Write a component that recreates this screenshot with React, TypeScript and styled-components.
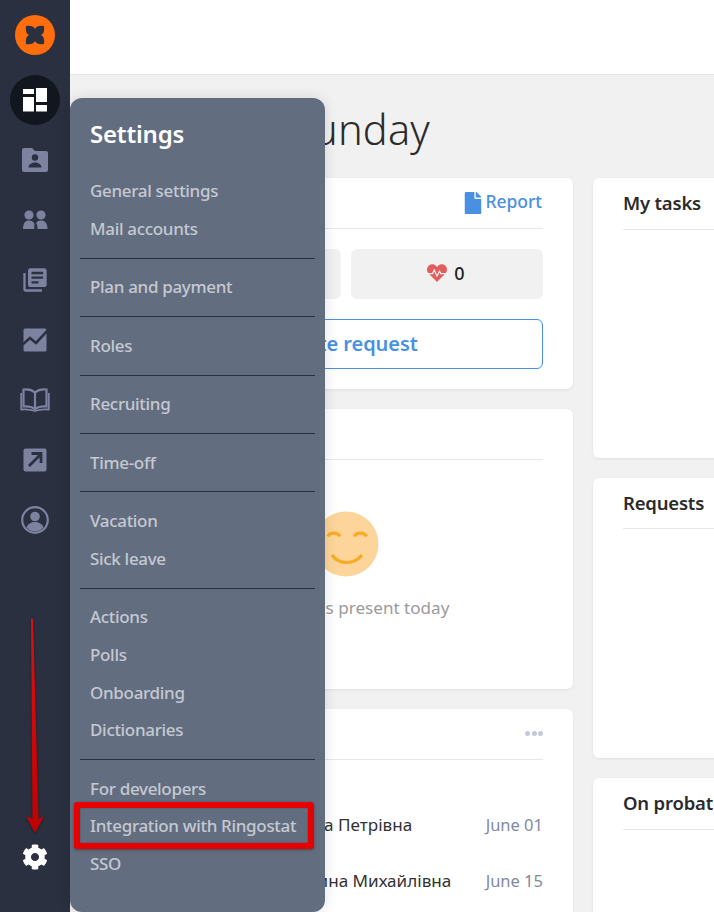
import { createGlobalStyle, styled } from "styled-components";
import { FaCog, FaFile, FaHeartbeat, FaPlane } from "react-icons/fa";

const sidebarBg = "#2a3040";
const iconColor = "#7d829f";
const flyoutBg = "#636d80";
const blue = "#4a90e2";
const textFont = `"Noto Sans", "Open Sans", sans-serif`;

const GlobalStyle = createGlobalStyle`
  html, body {
    margin: 0;
    padding: 0;
    background: #f1f1f1;
    font-family: ${textFont};
  }
`;

const Page = styled.div`
  position: relative;
  display: flex;
  width: 714px;
  height: 912px;
  overflow: hidden;
`;

const Sidebar = styled.nav`
  flex: 0 0 70px;
  display: flex;
  flex-direction: column;
  align-items: center;
  background: ${sidebarBg};
`;

const NavSlot = styled.div<{ $height: number }>`
  height: ${({ $height }) => $height}px;
  flex: none;
  width: 100%;
  display: flex;
  align-items: center;
  justify-content: center;
  color: ${iconColor};
`;

const ActiveDisc = styled.div`
  width: 50px;
  height: 50px;
  border-radius: 50%;
  background: #12161f;
  display: flex;
  align-items: center;
  justify-content: center;
`;

const GearSlot = styled.div`
  margin-top: auto;
  height: 110px;
  padding-bottom: 42px;
  box-sizing: border-box;
  display: flex;
  align-items: flex-end;
  color: #fff;
  font-size: 26px;
  line-height: 0;
`;

const Main = styled.main`
  flex: 1;
  min-width: 0;
  display: flex;
  flex-direction: column;
  overflow: hidden;
`;

const TopBar = styled.header`
  flex: 0 0 74px;
  background: #fff;
  border-bottom: 1px solid #e6e6e6;
`;

const Content = styled.div`
  padding-left: 49px;
  width: 928px;
`;

const Title = styled.h1`
  margin: 0;
  height: 103px;
  padding-top: 4px;
  box-sizing: border-box;
  display: flex;
  align-items: center;
  justify-content: flex-end;
  width: 311px;
  font-size: 41.5px;
  font-weight: 300;
  color: #2b2b2b;
  white-space: nowrap;
  letter-spacing: 0.2px;
`;

const Columns = styled.div`
  display: flex;
  gap: 20px;
`;

const Column = styled.div`
  width: 454px;
  display: flex;
  flex-direction: column;
  gap: 20px;
`;

const Card = styled.section<{ $height: number }>`
  height: ${({ $height }) => $height}px;
  box-sizing: border-box;
  padding: 0 30px;
  background: #fff;
  border-radius: 6px;
  box-shadow: 0 1px 3px rgba(0, 0, 0, 0.08);
  display: flex;
  flex-direction: column;
`;

const CardHeader = styled.div<{ $extra?: number }>`
  flex: 0 0 50px;
  box-sizing: content-box;
  padding-bottom: ${({ $extra = 0 }) => $extra}px;
  display: flex;
  align-items: center;
  justify-content: space-between;
  border-bottom: 1px solid #e8e8e8;
`;

const CardTitle = styled.h2`
  margin: 0 0 1px;
  font-size: 18.5px;
  font-weight: 600;
  color: #2b2b2b;
  letter-spacing: -0.2px;
`;

const ReportLink = styled.a`
  display: flex;
  align-items: center;
  gap: 2px;
  margin-right: 1px;
  color: ${blue};
  font-size: 17.5px;
  font-weight: 500;
  letter-spacing: -0.05px;
`;

const ReportLabel = styled.span`
  margin-bottom: 5px;
`;

const Dots = styled.div`
  display: flex;
  gap: 1.5px;
  margin-bottom: 2px;
`;

const Dot = styled.span`
  width: 5px;
  height: 5px;
  border-radius: 50%;
  background: #c4cadb;
`;

const Stats = styled.div`
  margin-top: 20px;
  display: flex;
  gap: 10px;
`;

const StatBox = styled.div`
  flex: 1;
  height: 50px;
  padding-bottom: 2px;
  box-sizing: border-box;
  border-radius: 6px;
  background: #f1f1f1;
  display: flex;
  align-items: center;
  justify-content: center;
  gap: 7px;
  font-size: 18px;
  font-weight: 500;
  color: #222;
`;

const HeartIcon = styled(FaHeartbeat)`
  color: #e35d5d;
  font-size: 20px;
  margin-left: -2px;
`;

const RequestButton = styled.button`
  margin-top: 20px;
  height: 50px;
  padding: 0 0 2px;
  border: 1px solid ${blue};
  border-radius: 6px;
  background: #fff;
  color: ${blue};
  font-family: inherit;
  font-size: 20px;
  font-weight: 600;
  letter-spacing: -0.05px;
`;

const EmptyState = styled.div`
  margin-top: 51px;
  display: flex;
  flex-direction: column;
  align-items: center;
  gap: 19px;
  font-size: 17.1px;
  color: #9b9b9b;
`;

const PersonList = styled.div`
  margin-top: 46px;
  display: flex;
  flex-direction: column;
  gap: 20px;
`;

const PersonRow = styled.div`
  height: 36px;
  display: flex;
  align-items: center;
  gap: 16px;
  font-size: 17.1px;
  color: #333;
  white-space: nowrap;
`;

const Avatar = styled.span`
  flex: 0 0 30px;
  height: 30px;
  border-radius: 50%;
  background: #d8dce6;
`;

const PersonDate = styled.span`
  margin-left: auto;
  color: #7f8aa3;
  font-size: 16.5px;
`;

const Flyout = styled.aside`
  position: absolute;
  left: 70px;
  top: 98px;
  bottom: 0;
  width: 255px;
  box-sizing: border-box;
  padding: 0 10px;
  background: ${flyoutBg};
  border-radius: 12px;
  box-shadow: 0 0 14px rgba(0, 0, 0, 0.12);
`;

const FlyoutTitle = styled.div`
  height: 74px;
  padding: 0 10px 3px;
  box-sizing: border-box;
  display: flex;
  align-items: center;
  color: #fff;
  font-size: 24px;
  font-weight: 600;
  letter-spacing: -0.2px;
`;

const FlyoutItem = styled.div`
  height: 37.7px;
  padding: 0 10px;
  display: flex;
  align-items: center;
  color: #c4c9d2;
  font-size: 17px;
  font-weight: 500;
  letter-spacing: -0.32px;
  white-space: nowrap;
`;

const FlyoutRule = styled.hr`
  margin: 10.4px 0 9.35px;
  height: 1px;
  border: 0;
  background: ${sidebarBg};
`;

const Highlight = styled.div`
  position: absolute;
  left: 74px;
  top: 802px;
  width: 240px;
  height: 47px;
  box-sizing: border-box;
  border: 6px solid #e60000;
  border-radius: 3px;
  box-shadow: 0 1px 3px rgba(0, 0, 0, 0.35), inset 0 0 2px rgba(0, 0, 0, 0.3);
`;

const ArrowMark = styled.svg`
  position: absolute;
  left: 20px;
  top: 612px;
  filter: drop-shadow(0 1px 1px rgba(0, 0, 0, 0.4));
`;

const menu = [
  ["General settings", "Mail accounts"],
  ["Plan and payment"],
  ["Roles"],
  ["Recruiting"],
  ["Time-off"],
  ["Vacation", "Sick leave"],
  ["Actions", "Polls", "Onboarding", "Dictionaries"],
  ["For developers", "Integration with Ringostat", "SSO"],
];

const Logo = () => (
  <svg width="40" height="40" viewBox="0 0 40 40">
    <circle cx="20" cy="20" r="20" fill="#ff6d0d" />
    <path
      d="M11 11Q18 10 20 14Q22 10 29 11Q30 18 26 20Q30 22 29 29Q22 30 20 26Q18 30 11 29Q10 22 14 20Q10 18 11 11Z"
      fill={sidebarBg}
    />
  </svg>
);

const DashboardIcon = () => (
  <svg width="24" height="24" viewBox="0 0 24 24" fill="#fff">
    <rect x="0" y="1" width="11" height="5" />
    <rect x="0" y="9" width="11" height="14.5" />
    <rect x="13" y="0" width="11" height="14" />
    <rect x="13" y="17" width="11" height="6.5" />
  </svg>
);

const FolderIcon = () => (
  <svg width="26" height="24" viewBox="0 0 26 24">
    <path
      d="M2 0h8l3 3h11a2 2 0 0 1 2 2v17a2 2 0 0 1-2 2H2a2 2 0 0 1-2-2V2a2 2 0 0 1 2-2z"
      fill="currentColor"
    />
    <circle cx="13" cy="9.5" r="3.2" fill={sidebarBg} />
    <path d="M6.5 19.5c0-3.6 4-5 6.5-5s6.5 1.4 6.5 5z" fill={sidebarBg} />
  </svg>
);

const PeopleIcon = () => (
  <svg width="26" height="20" viewBox="0 0 26 20" fill="currentColor">
    <circle cx="7" cy="5" r="4.6" />
    <circle cx="19" cy="5" r="4.6" />
    <path d="M1 19c0-6 2.5-8.5 6-8.5 2.4 0 4.500 1.200 5.400 3.400L12.200 19z" />
    <path d="M25.500 19c0-6-2.800-8.500-6.500-8.500-2 0-3.800.8-4.900 2.600 1 1.600 1.400 3.500 1.400 5.900z" />
  </svg>
);

const BooksIcon = () => (
  <svg width="28" height="28" viewBox="0 0 24 24" fill="currentColor">
    <path d="M4 6H2v14c0 1.100.9 2 2 2h14v-2H4V6zm16-4H8c-1.100 0-2 .9-2 2v12c0 1.100.9 2 2 2h12c1.100 0 2-.9 2-2V4c0-1.100-.9-2-2-2zm-1 9H9V9h10v2zm-4 4H9v-2h6v2zm4-8H9V5h10v2z" />
  </svg>
);

const ChartIcon = () => (
  <svg width="24" height="24" viewBox="0 0 24 24">
    <rect x="0.5" y="0.5" width="23" height="23" rx="1.500" fill="currentColor" />
    <path d="M-1 17L7 10l6 5L25 2" fill="none" stroke={sidebarBg} strokeWidth="2.600" />
  </svg>
);

const BookIcon = () => (
  <svg width="30" height="24" viewBox="0 0 30 24" fill="none" stroke="currentColor" strokeWidth="2.200">
    <path d="M15 4.500C12 1.800 7 1 3.500 1.500V18.500c4-.5 8.500.3 11.500 2.500 3-2.200 7.500-3 11.500-2.500V1.500C23 1 18 1.800 15 4.500zM15 4.500V21" />
    <path d="M1.200 5v16.500c4.500-.5 9.800 0 13.800 1.500 4-1.500 9.300-2 13.800-1.500V5" strokeWidth="1.800" />
  </svg>
);

const ExternalIcon = () => (
  <svg width="24" height="24" viewBox="0 0 24 24">
    <rect x="0.500" y="0.500" width="23" height="23" rx="2" fill="currentColor" />
    <path d="M6 18L17.500 6.500M8.500 5.500h9.500V15" fill="none" stroke={sidebarBg} strokeWidth="2.800" />
  </svg>
);

const AccountIcon = () => (
  <svg width="28" height="28" viewBox="0 0 28 28">
    <circle cx="14" cy="14" r="12.800" fill="none" stroke="currentColor" strokeWidth="2.200" />
    <circle cx="14" cy="10.500" r="4.800" fill="currentColor" />
    <path d="M5.500 21.500c1-3.600 5-5.500 8.500-5.500s7.500 1.900 8.500 5.500C20 24.300 17 25.500 14 25.500S8 24.300 5.500 21.500z" fill="currentColor" />
  </svg>
);

const SmileFace = () => (
  <svg width="66" height="66" viewBox="0 0 66 66">
    <circle cx="33" cy="33" r="32.500" fill="#fdd59a" />
    <g fill="none" stroke="#f9ab25" strokeWidth="3.200">
      <path d="M15 25.500c1.500-4.500 10-4.500 12 0" />
      <path d="M41.500 25.500c1.500-4.500 10-4.500 12 0" />
      <path d="M19 44c7 10 22 10 30 0" />
    </g>
  </svg>
);

export default function App() {
  return (
    <Page>
      <GlobalStyle />
      <Sidebar>
        <NavSlot $height={70}>
          <Logo />
        </NavSlot>
        <NavSlot $height={60}>
          <ActiveDisc>
            <DashboardIcon />
          </ActiveDisc>
        </NavSlot>
        <NavSlot $height={60}>
          <FolderIcon />
        </NavSlot>
        <NavSlot $height={60}>
          <PeopleIcon />
        </NavSlot>
        <NavSlot $height={60}>
          <BooksIcon />
        </NavSlot>
        <NavSlot $height={60}>
          <ChartIcon />
        </NavSlot>
        <NavSlot $height={60}>
          <BookIcon />
        </NavSlot>
        <NavSlot $height={60}>
          <ExternalIcon />
        </NavSlot>
        <NavSlot $height={60}>
          <AccountIcon />
        </NavSlot>
        <GearSlot>
          <FaCog />
        </GearSlot>
      </Sidebar>

      <Main>
        <TopBar />
        <Content>
          <Title>Today is Sunday</Title>
          <Columns>
            <Column>
              <Card $height={211}>
                <CardHeader>
                  <CardTitle>Today</CardTitle>
                  <ReportLink>
                    <FaFile size={22} />
                    <ReportLabel>Report</ReportLabel>
                  </ReportLink>
                </CardHeader>
                <Stats>
                  <StatBox>
                    <FaPlane />0
                  </StatBox>
                  <StatBox>
                    <HeartIcon />0
                  </StatBox>
                </Stats>
                <RequestButton>Create request</RequestButton>
              </Card>
              <Card $height={280}>
                <CardHeader>
                  <CardTitle>Absent</CardTitle>
                </CardHeader>
                <EmptyState>
                  <SmileFace />
                  Everyone is present today
                </EmptyState>
              </Card>
              <Card $height={300}>
                <CardHeader>
                  <CardTitle>Birthdays</CardTitle>
                  <Dots>
                    <Dot />
                    <Dot />
                    <Dot />
                  </Dots>
                </CardHeader>
                <PersonList>
                  <PersonRow>
                    <Avatar />
                    Ковальчук Ганна Петрівна
                    <PersonDate>June 01</PersonDate>
                  </PersonRow>
                  <PersonRow>
                    <Avatar />
                    Шевченко Ясмина Михайлівна
                    <PersonDate>June 15</PersonDate>
                  </PersonRow>
                </PersonList>
              </Card>
            </Column>
            <Column>
              <Card $height={280}>
                <CardHeader $extra={1}>
                  <CardTitle>My tasks</CardTitle>
                </CardHeader>
              </Card>
              <Card $height={280}>
                <CardHeader>
                  <CardTitle>Requests</CardTitle>
                </CardHeader>
              </Card>
              <Card $height={280}>
                <CardHeader $extra={1}>
                  <CardTitle>On probation</CardTitle>
                </CardHeader>
              </Card>
            </Column>
          </Columns>
        </Content>
      </Main>

      <Flyout>
        <FlyoutTitle>Settings</FlyoutTitle>
        {menu.map((group, i) => (
          <div key={group[0]}>
            {i > 0 && <FlyoutRule />}
            {group.map((label) => (
              <FlyoutItem key={label}>{label}</FlyoutItem>
            ))}
          </div>
        ))}
      </Flyout>

      <Highlight />
      <ArrowMark width="30" height="226" viewBox="0 0 30 226">
        <defs>
          <linearGradient id="arrowRed" x1="0" y1="0" x2="0" y2="1">
            <stop offset="0%" stopColor="#e01010" />
            <stop offset="100%" stopColor="#c00000" />
          </linearGradient>
        </defs>
        <path
          d="M11 7L13 7L18.500 207L24 204L15 221L6 204L12.500 207Z"
          fill="url(#arrowRed)"
        />
      </ArrowMark>
    </Page>
  );
}
